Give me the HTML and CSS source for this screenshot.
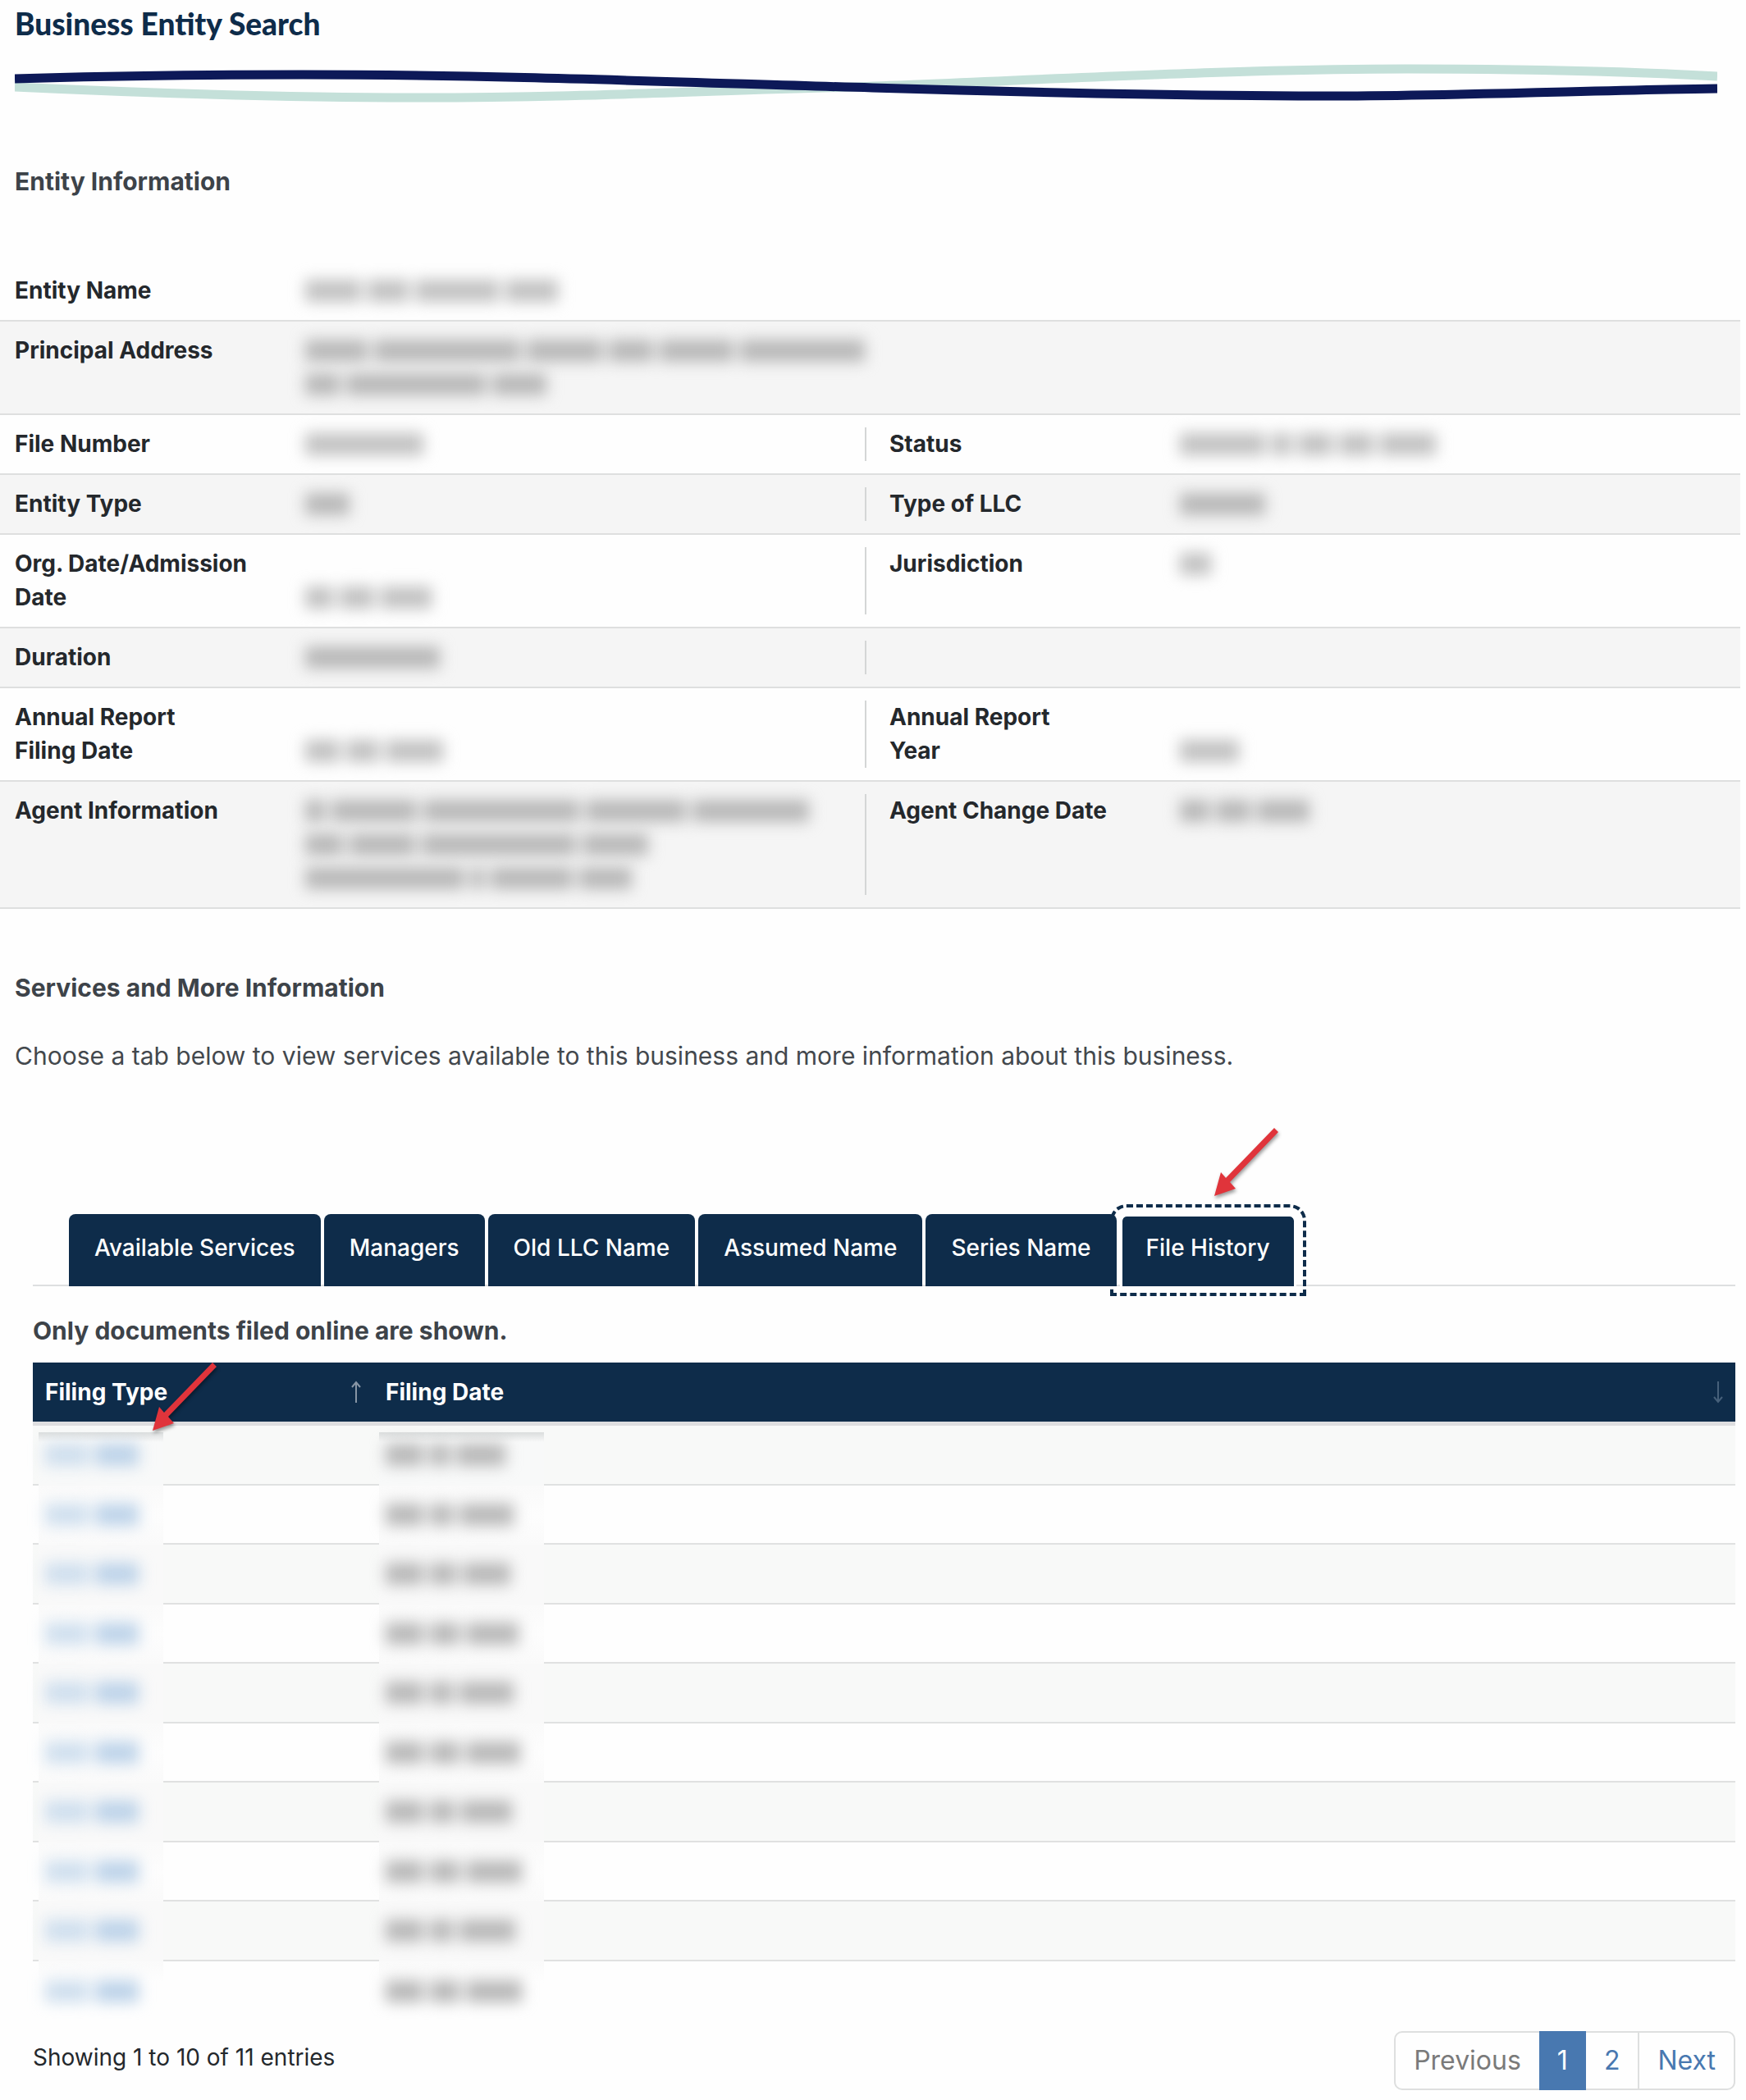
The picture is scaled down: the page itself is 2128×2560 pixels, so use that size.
FILE: index.html
```html
<!DOCTYPE html>
<html lang="en">
<head>
<meta charset="utf-8">
<meta name="viewport" content="width=device-width, initial-scale=1">
<title>Business Entity Search</title>
<link rel="stylesheet" href="styles.css">
</head>
<body>
<main class="page">
  <header class="masthead">
    <h1>Business Entity Search</h1>
    <svg class="wave" viewBox="19 78 2074 48" preserveAspectRatio="none" aria-hidden="true">
      <path class="wave-teal" d="M19 106C190 114 340 119 510 119C700 119 850 111 1040 106C1260 98 1500 84 1715 84C1850 84 1970 86 2093 93"/>
      <path class="wave-navy" d="M19 96C140 92 250 91 370 91C600 91 850 101 1064 107C1260 113 1440 117 1640 117C1800 116 1950 110 2093 108"/>
    </svg>
  </header>

  <section class="entity">
    <h2>Entity Information</h2>
    <dl class="facts">
      <div class="row">
        <div class="pair"><dt>Entity Name</dt><dd><span class="redacted"><i style="width:68px"></i><i style="width:50px"></i><i style="width:102px"></i><i style="width:64px"></i></span></dd></div>
      </div>
      <div class="row">
        <div class="pair wide"><dt>Principal Address</dt><dd><span class="redacted"><i style="width:76px"></i><i style="width:178px"></i><i style="width:92px"></i><i style="width:54px"></i><i style="width:90px"></i><i style="width:152px"></i></span><span class="redacted"><i style="width:42px"></i><i style="width:170px"></i><i style="width:66px"></i></span></dd></div>
      </div>
      <div class="row">
        <div class="pair"><dt>File Number</dt><dd><span class="redacted"><i style="width:144px"></i></span></dd></div>
        <div class="pair second"><dt>Status</dt><dd><span class="redacted"><i style="width:104px"></i><i style="width:24px"></i><i style="width:42px"></i><i style="width:42px"></i><i style="width:68px"></i></span></dd></div>
      </div>
      <div class="row">
        <div class="pair"><dt>Entity Type</dt><dd><span class="redacted"><i style="width:54px"></i></span></dd></div>
        <div class="pair second"><dt>Type of LLC</dt><dd><span class="redacted"><i style="width:104px"></i></span></dd></div>
      </div>
      <div class="row">
        <div class="pair"><dt>Org. Date/Admission<br>Date</dt><dd class="low"><span class="redacted"><i style="width:34px"></i><i style="width:42px"></i><i style="width:62px"></i></span></dd></div>
        <div class="pair second"><dt>Jurisdiction</dt><dd><span class="redacted"><i style="width:38px"></i></span></dd></div>
      </div>
      <div class="row">
        <div class="pair"><dt>Duration</dt><dd><span class="redacted"><i style="width:164px"></i></span></dd></div>
        <div class="pair second"></div>
      </div>
      <div class="row">
        <div class="pair"><dt>Annual Report<br>Filing Date</dt><dd class="low"><span class="redacted"><i style="width:42px"></i><i style="width:40px"></i><i style="width:70px"></i></span></dd></div>
        <div class="pair second"><dt>Annual Report<br>Year</dt><dd class="low"><span class="redacted"><i style="width:72px"></i></span></dd></div>
      </div>
      <div class="row">
        <div class="pair"><dt>Agent Information</dt><dd><span class="redacted"><i style="width:24px"></i><i style="width:104px"></i><i style="width:190px"></i><i style="width:122px"></i><i style="width:142px"></i></span><span class="redacted"><i style="width:46px"></i><i style="width:80px"></i><i style="width:188px"></i><i style="width:80px"></i></span><span class="redacted"><i style="width:194px"></i><i style="width:16px"></i><i style="width:100px"></i><i style="width:64px"></i></span></dd></div>
        <div class="pair second"><dt>Agent Change Date</dt><dd><span class="redacted"><i style="width:36px"></i><i style="width:42px"></i><i style="width:64px"></i></span></dd></div>
      </div>
    </dl>
  </section>

  <section class="services">
    <h2>Services and More Information</h2>
    <p class="intro">Choose a tab below to view services available to this business and more information about this business.</p>

    <div class="tab-area">
      <div class="tabs" role="tablist">
        <button class="tab" type="button" role="tab">Available Services</button>
        <button class="tab" type="button" role="tab">Managers</button>
        <button class="tab" type="button" role="tab">Old LLC Name</button>
        <button class="tab" type="button" role="tab">Assumed Name</button>
        <button class="tab" type="button" role="tab">Series Name</button>
        <button class="tab current" type="button" role="tab" aria-selected="true">File History
          <svg class="pointer" viewBox="0 0 90 92" aria-hidden="true"><path d="M81 4L86 9L27 70L34 78L8 87L16 58L22 65Z"/></svg>
        </button>
      </div>

      <p class="note">Only documents filed online are shown.</p>
      <div class="filings-wrap">
        <table class="filings">
          <thead>
            <tr>
              <th class="type-col"><span class="head">Filing Type <svg class="sort" viewBox="0 0 12 28" aria-hidden="true"><path d="M6 27V2M1 8L6 2L11 8"/></svg></span></th>
              <th><span class="head">Filing Date <svg class="sort dim" viewBox="0 0 12 28" aria-hidden="true"><path d="M6 1V26M1 20L6 26L11 20"/></svg></span></th>
            </tr>
          </thead>
          <tbody>
            <tr><td><a class="redacted" href="#"><i></i><i></i></a></td><td><span class="redacted"><i style="width:46px"></i><i style="width:24px"></i><i style="width:60px"></i></span></td></tr>
            <tr><td><a class="redacted" href="#"><i></i><i></i></a></td><td><span class="redacted"><i style="width:46px"></i><i style="width:28px"></i><i style="width:66px"></i></span></td></tr>
            <tr><td><a class="redacted" href="#"><i></i><i></i></a></td><td><span class="redacted"><i style="width:46px"></i><i style="width:32px"></i><i style="width:58px"></i></span></td></tr>
            <tr><td><a class="redacted" href="#"><i></i><i></i></a></td><td><span class="redacted"><i style="width:46px"></i><i style="width:36px"></i><i style="width:64px"></i></span></td></tr>
            <tr><td><a class="redacted" href="#"><i></i><i></i></a></td><td><span class="redacted"><i style="width:46px"></i><i style="width:28px"></i><i style="width:66px"></i></span></td></tr>
            <tr><td><a class="redacted" href="#"><i></i><i></i></a></td><td><span class="redacted"><i style="width:46px"></i><i style="width:36px"></i><i style="width:66px"></i></span></td></tr>
            <tr><td><a class="redacted" href="#"><i></i><i></i></a></td><td><span class="redacted"><i style="width:46px"></i><i style="width:30px"></i><i style="width:62px"></i></span></td></tr>
            <tr><td><a class="redacted" href="#"><i></i><i></i></a></td><td><span class="redacted"><i style="width:46px"></i><i style="width:36px"></i><i style="width:68px"></i></span></td></tr>
            <tr><td><a class="redacted" href="#"><i></i><i></i></a></td><td><span class="redacted"><i style="width:46px"></i><i style="width:28px"></i><i style="width:68px"></i></span></td></tr>
            <tr><td><a class="redacted" href="#"><i></i><i></i></a></td><td><span class="redacted"><i style="width:46px"></i><i style="width:36px"></i><i style="width:68px"></i></span></td></tr>
          </tbody>
        </table>
        <svg class="pointer on-table" viewBox="0 0 90 92" aria-hidden="true"><path d="M81 4L86 9L27 70L34 78L8 87L16 58L22 65Z"/></svg>
      </div>

      <footer class="table-foot">
        <p>Showing 1 to 10 of 11 entries</p>
        <nav class="pager" aria-label="Filing pages">
          <button type="button" disabled>Previous</button>
          <a class="on" href="#" aria-current="page">1</a>
          <a href="#">2</a>
          <a class="next" href="#">Next</a>
        </nav>
      </footer>
    </div>
  </section>
</main>
</body>
</html>
```
FILE: styles.css
```css
* { box-sizing: border-box; }

body {
  margin: 0;
  background: #fefefe;
  color: #24282c;
  font-family: Inter, "Liberation Sans", sans-serif;
  font-size: 28px;
  line-height: 41px;
}

h1, h2, p, dl, dd { margin: 0; }

.page { padding-right: 7px; }

.masthead { padding: 4px 28px 0 18px; }

h1 {
  color: #0e2c4a;
  font-family: Lato, "Liberation Sans", sans-serif;
  font-size: 37px;
  font-weight: 900;
  line-height: 50px;
}

.wave {
  display: block;
  width: 100%;
  height: 48px;
  margin-top: 24px;
}

.wave path { fill: none; stroke-width: 11; }
.wave .wave-teal { stroke: #c4e0d9; }
.wave .wave-navy { stroke: #0d1958; }

h2 {
  padding-left: 18px;
  color: #3d4349;
  font-size: 30px;
  font-weight: 700;
}

.entity h2 { margin-top: 75px; }

.facts { margin-top: 77px; }

.row {
  display: grid;
  grid-template-columns: 1054fr 1067fr;
  padding: 15px 0;
  border-bottom: 2px solid #dedfdf;
}

.row:nth-child(even) { background: #f5f5f5; }

.pair {
  display: flex;
  min-height: 41px;
  padding-left: 18px;
}

.pair.wide { grid-column: 1 / -1; }

.pair.second {
  padding-left: 28px;
  border-left: 2px solid #d4d6d6;
}

dt {
  flex: 0 0 354px;
  font-weight: 700;
}

dd.low { align-self: flex-end; }

/* Private values are masked with blurred bars, one per word. */
.redacted {
  display: flex;
  align-items: center;
  gap: 8px;
  height: 41px;
  filter: blur(9px);
}

.redacted i {
  height: 27px;
  background: #b8b8b8;
}

.row:nth-child(odd) .redacted i { background: #c2c2c2; }

.services { padding-top: 76px; }

.intro {
  margin-top: 42px;
  padding-left: 18px;
  color: #43484d;
  font-size: 30px;
}

.tab-area { padding: 172px 6px 0 40px; }

.tabs {
  display: flex;
  gap: 4px;
  padding-left: 44px;
  border-bottom: 2px solid #dddfe0;
}

.tab {
  height: 88px;
  margin: 0 0 -2px;
  padding: 0 31px 6px;
  border: 0;
  border-radius: 8px 8px 0 0;
  background: #0e2c4a;
  color: #fff;
  font: 500 28px/41px Inter, "Liberation Sans", sans-serif;
}

.tab.current {
  position: relative;
  padding: 0 29px 9px;
  border: 3px solid #fff;
  border-bottom: 0;
  background-clip: padding-box;
  outline: 4px dashed #0e2c4a;
  outline-offset: 8px;
}

.pointer {
  position: absolute;
  right: 15px;
  bottom: 105px;
  width: 90px;
  height: 92px;
  filter: drop-shadow(1px 3px 2px rgba(0, 0, 0, .4));
}

.pointer path { fill: #e0343b; }

.note {
  margin-top: 34px;
  color: #3d4349;
  font-size: 30px;
  font-weight: 700;
}

.filings-wrap {
  position: relative;
  margin-top: 18px;
}

.pointer.on-table {
  top: -4px;
  left: 138px;
}

.filings {
  width: 100%;
  border-spacing: 0;
  table-layout: fixed;
}

.filings th {
  height: 77px;
  padding: 0 15px;
  border-bottom: 5px solid #dedee0;
  background: #0e2c4a;
  color: #fff;
  font-weight: 700;
  text-align: left;
}

.filings .type-col { width: 415px; }

.head {
  display: flex;
  justify-content: space-between;
  align-items: center;
}

.sort {
  width: 12px;
  height: 28px;
  fill: none;
  stroke: #8795a5;
  stroke-width: 2;
}

.sort.dim { stroke: #46607a; }

.filings td {
  position: relative;
  height: 73px;
  padding: 0 15px;
  border-bottom: 2px solid #e0e1e1;
}

.filings tr:nth-child(even) td { height: 72px; }
.filings tbody tr:nth-child(odd) { background: #f8f9f8; }
.filings tr:last-child td { border-bottom: 0; }

/* The mask hides the row rule behind the blurred values. */
.filings td::before {
  content: "";
  position: absolute;
  inset: 0 auto -2px 7px;
  width: 152px;
  background: linear-gradient(#fafafa, #fdfdfd 50%, #fafafa);
}

.filings td:last-child::before { width: 201px; }
.filings tr:nth-child(odd) td::before { background: #f9f9f9; }

.filings tbody tr:first-child td::before {
  top: 8px;
  background: linear-gradient(#dadddd, #f8f9f9 12px);
}

.filings tr:last-child td::before {
  bottom: 20px;
  background: linear-gradient(#fafafa, #fefefe 50%);
}

.filings .redacted { position: relative; }
.filings a.redacted i { width: 53px; background: #cfdfee; }
.filings a.redacted i:last-child { background: #bdd3e9; }

.table-foot {
  display: flex;
  justify-content: space-between;
  align-items: flex-start;
  padding-top: 13px;
}

.table-foot p { padding-top: 12px; }

.pager {
  display: flex;
  height: 72px;
  border: 2px solid #dedfdf;
  border-radius: 10px;
  font-size: 32px;
}

.pager > * {
  margin: -2px 0;
  padding: 0 22px;
  border: 0;
  background: none;
  color: #4878b0;
  font: inherit;
  line-height: 72px;
  text-decoration: none;
}

.pager button { color: #7a7a7a; }
.pager .on { background: #4878b0; color: #fff; }
.pager .next {
  margin: 0;
  border-left: 2px solid #dedfdf;
  line-height: 68px;
}
```
